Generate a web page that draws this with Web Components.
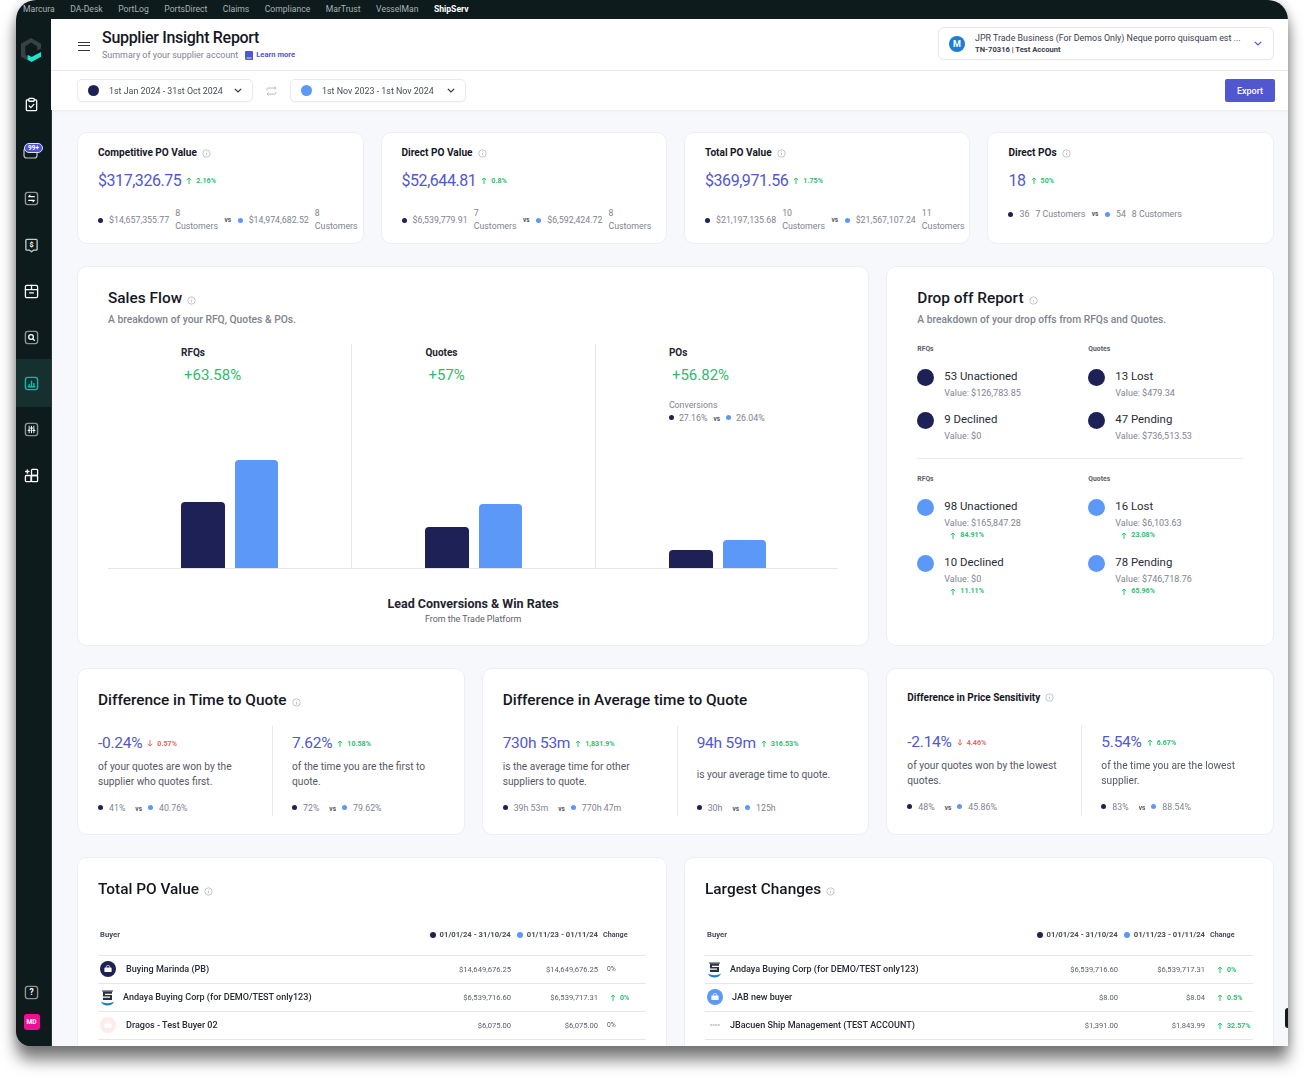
<!DOCTYPE html>
<html lang="en">
<head>
<meta charset="utf-8">
<title>Supplier Insight Report</title>
<style>
html, body { margin: 0; background: #fff; height: 1080px; overflow: hidden; }
body { font-family: Roboto, "Liberation Sans", sans-serif; padding: 0 16px; }
</style>
</head>
<body>
<app-window>
  <top-bar slot="top"></top-bar>
  <side-bar slot="side"></side-bar>
  <page-header slot="head"></page-header>
  <page-toolbar slot="head"></page-toolbar>

  <stat-card style="grid-column: span 3" label="Competitive PO Value" value="$317,326.75" delta="2.16%" a="$14,657,355.77" an="8" b="$14,974,682.52" bn="8"></stat-card>
  <stat-card style="grid-column: span 3" label="Direct PO Value" value="$52,644.81" delta="0.8%" a="$6,539,779.91" an="7" b="$6,592,424.72" bn="8"></stat-card>
  <stat-card style="grid-column: span 3" label="Total PO Value" value="$369,971.56" delta="1.75%" a="$21,197,135.68" an="10" b="$21,567,107.24" bn="11"></stat-card>
  <stat-card style="grid-column: span 3" label="Direct POs" value="18" delta="50%" a="36" an="7" b="54" bn="8" inline></stat-card>

  <sales-flow style="grid-column: span 8"></sales-flow>
  <drop-off style="grid-column: span 4"></drop-off>

  <diff-card style="grid-column: span 4" label="Difference in Time to Quote" info>
    <diff-col value="-0.24%" delta="0.57%" down a="41%" b="40.76%">of your quotes are won by the supplier who quotes first.</diff-col>
    <diff-col value="7.62%" delta="10.58%" a="72%" b="79.62%">of the time you are the first to quote.</diff-col>
  </diff-card>
  <diff-card style="grid-column: span 4" label="Difference in Average time to Quote">
    <diff-col value="730h 53m" delta="1,831.9%" a="39h 53m" b="770h 47m">is the average time for other suppliers to quote.</diff-col>
    <diff-col value="94h 59m" delta="316.53%" a="30h" b="125h">is your average time to quote.</diff-col>
  </diff-card>
  <diff-card style="grid-column: span 4" label="Difference in Price Sensitivity" info small>
    <diff-col value="-2.14%" delta="4.46%" down a="48%" b="45.86%">of your quotes won by the lowest quotes.</diff-col>
    <diff-col value="5.54%" delta="6.67%" a="83%" b="88.54%">of the time you are the lowest supplier.</diff-col>
  </diff-card>

  <table-card style="grid-column: span 6" label="Total PO Value">
    <table-row logo="navy" name="Buying Marinda (PB)" v1="$14,649,676.25" v2="$14,649,676.25" change="0%" flat></table-row>
    <table-row logo="andaya" name="Andaya Buying Corp (for DEMO/TEST only123)" v1="$6,539,716.60" v2="$6,539,717.31" change="0%"></table-row>
    <table-row logo="pink" name="Dragos - Test Buyer 02" v1="$6,075.00" v2="$6,075.00" change="0%" flat></table-row>
  </table-card>
  <table-card style="grid-column: span 6" label="Largest Changes">
    <table-row logo="andaya" name="Andaya Buying Corp (for DEMO/TEST only123)" v1="$6,539,716.60" v2="$6,539,717.31" change="0%"></table-row>
    <table-row logo="blue" name="JAB new buyer" v1="$8.00" v2="$8.04" change="0.5%"></table-row>
    <table-row logo="dash" name="JBacuen Ship Management (TEST ACCOUNT)" v1="$1,391.00" v2="$1,843.99" change="32.57%"></table-row>
  </table-card>
</app-window>

<script>
const NAVY = '#1e2156', BLUE = '#5c98f7', INK = '#15171f', GREY = '#80848f', PURPLE = '#5157cf';

const INFO = `<svg width="9" height="9" viewBox="0 0 9 9" fill="none" stroke="#b4b7bf" stroke-width=".8"><circle cx="4.5" cy="4.5" r="3.7"/><path d="M4.5 4v2.4M4.5 2.5v.7"/></svg>`;
const CHEVRON = c => `<svg width="8" height="5" viewBox="0 0 8 5" fill="none" stroke="${c}" stroke-width="1.2"><path d="M.8.8L4 4 7.2.8"/></svg>`;

class AppWindow extends HTMLElement {
    connectedCallback() {
        this.attachShadow({ mode: 'open' }).innerHTML = `
<style>
:host { display: block; position: relative; height: 1046px; border-radius: 20px 20px 0 14px; box-shadow: 0 14px 15px 0 rgba(0,0,0,.5), 0 0 12px rgba(0,0,0,.2); filter: blur(.5px); }
.clip { height: 100%; display: flex; flex-direction: column; overflow: hidden; border-radius: inherit; background: #f7f8fb; }
.body { flex: 1; min-height: 0; display: flex; }
.main { flex: 1; min-width: 0; display: flex; flex-direction: column; }
.grid { flex: 1; min-height: 0; overflow: hidden; display: grid; grid-template-columns: repeat(12, 1fr); grid-auto-rows: min-content; gap: 22px 17px; padding: 22px 14px 0 26px; }
.chat { position: absolute; right: 0; top: 1008px; width: 3px; height: 20px; background: #16191c; border-radius: 10px 0 0 10px; }
</style>
<div class="clip">
  <slot name="top"></slot>
  <div class="body">
    <slot name="side"></slot>
    <div class="main">
      <slot name="head"></slot>
      <div class="grid"><slot></slot></div>
    </div>
  </div>
</div>
<div class="chat"></div>`;
    }
}

class TopBar extends HTMLElement {
    connectedCallback() {
        const names = ['Marcura', 'DA-Desk', 'PortLog', 'PortsDirect', 'Claims', 'Compliance', 'MarTrust', 'VesselMan', 'ShipServ'];
        this.attachShadow({ mode: 'open' }).innerHTML = `
<style>
:host { display: flex; flex: none; height: 19px; box-sizing: border-box; padding: 0 0 2px 7px; background: #0d1b1c; align-items: center; gap: 15.5px; font-size: 8.6px; color: #aab2b3; white-space: nowrap; }
.on { color: #fff; font-weight: 700; }
</style>
${names.map(n => `<span class="${n === 'ShipServ' ? 'on' : ''}">${n}</span>`).join('')}`;
    }
}

class SideBar extends HTMLElement {
    connectedCallback() {
        const box = inner => `<svg width="15" height="15" viewBox="0 0 16 16" fill="none" stroke="#fff" stroke-width="1.4" stroke-linecap="round" stroke-linejoin="round">${inner}</svg>`;
        const framed = (inner, c = '#8d9394') => box(`<rect x="1.5" y="1.5" width="13" height="13" rx="2.5" stroke="${c}" stroke-width="1.5"/>${inner}`);
        const icons = [
            box(`<path d="M5 3H3.5A1 1 0 0 0 2.5 4v9.5a1 1 0 0 0 1 1h9a1 1 0 0 0 1-1V4a1 1 0 0 0-1-1H11"/><rect x="5" y="1.5" width="6" height="3" rx="1"/><path d="M5.5 9.5l1.8 1.8 3.2-3.4"/>`),
            `<svg width="20" height="16" viewBox="0 0 20 16" fill="none" style="margin-left:2px"><rect x="1" y="5" width="13" height="10" rx="2.5" stroke="#c6caca" stroke-width="1.2"/><rect x="1.5" y=".5" width="18" height="9" rx="4.5" fill="#4f55d0" stroke="#dfe1f7" stroke-width="1"/><text x="10.5" y="7.4" text-anchor="middle" font-family="Roboto" font-size="6.4" font-weight="700" fill="#fff">99+</text></svg>`,
            framed(`<path d="M5 6h6M5 6l1.5-1.5M11 10H5M11 10l-1.5 1.5" stroke-width="1.1"/>`),
            box(`<path d="M3 1.5h10a1 1 0 0 1 1 1V12a1 1 0 0 1-1 1h-3l-2 1.7L6 13H3a1 1 0 0 1-1-1V2.5a1 1 0 0 1 1-1z" stroke="#c6caca"/><text x="8" y="10" text-anchor="middle" font-family="Roboto" font-size="7.5" font-weight="700" fill="#fff" stroke="none">$</text>`),
            box(`<rect x="1.5" y="1.5" width="13" height="13" rx="1.5"/><path d="M1.5 6h13M8 1.5V6M6 9.5h4"/>`),
            framed(`<circle cx="7.5" cy="7.5" r="2.5"/><path d="M9.5 9.5l1.5 1.5"/>`),
            framed(`<path d="M4.5 11.5h7M5.5 11V9M8 11V5.5M10.5 11V8" stroke="#1cb8ae" stroke-width="1.5"/>`, '#17b3aa'),
            framed(`<path d="M5.5 4.5v7M8 4.5v7M10.5 4.5v7" stroke-width="1"/><path d="M4.5 9h2M7 6.5h2M9.5 9h2" stroke-width="1.3"/>`),
            box(`<path d="M3.5 2v3.5M1.75 3.75h3.5"/><rect x="1.5" y="8" width="6" height="6.5" rx="1"/><rect x="8" y="8" width="6.5" height="6.5" rx="1"/><rect x="8" y="1.5" width="6.5" height="6.5" rx="1"/>`)
        ];
        const heights = { 1: 48, 2: 47 };
        this.attachShadow({ mode: 'open' }).innerHTML = `
<style>
:host { display: flex; flex: none; width: 35px; flex-direction: column; background: #0d1b1c; box-shadow: 1px 0 0 #2a3436; }
.logo { height: 62px; display: flex; align-items: center; justify-content: center; flex: none; padding-right: 4px; box-sizing: border-box; }
.item { height: 46px; flex: none; display: flex; align-items: center; justify-content: center; padding-right: 4px; }
.item.on { background: #16302f; height: 48px; margin: -1px 0; }
.foot { margin-top: auto; display: flex; flex-direction: column; align-items: center; gap: 14px; padding: 0 4px 16px 0; }
.md { width: 16px; height: 16px; border-radius: 3px; background: #ee0f96; color: #fff; font-size: 6.5px; font-weight: 700; display: flex; align-items: center; justify-content: center; }
</style>
<div class="logo">
  <svg width="23" height="26" viewBox="0 0 24 27"><path d="M11.5 1L22 7v5l-4 2V9.5l-6.5-3.8-6 3.8v9l3 1.7v4.500L1 20.5V7z" fill="#3a4144"/><path d="M8 18.5l4 2.3 10-5.300v5L12 26l-4-2.300z" fill="#1fe3cb"/></svg>
</div>
${icons.map((s, i) => `<div class="item ${i === 6 ? 'on' : ''}" ${heights[i] ? `style="height:${heights[i]}px"` : ''}>${s}</div>`).join('')}
<div class="foot">
  ${framed('<text x="8" y="11" text-anchor="middle" font-family="Roboto" font-size="9" font-weight="700" fill="#fff" stroke="none">?</text>')}
  <div class="md">MD</div>
</div>`;
    }
}

class PageHeader extends HTMLElement {
    connectedCallback() {
        this.attachShadow({ mode: 'open' }).innerHTML = `
<style>
:host { display: flex; flex: none; height: 52px; box-sizing: border-box; background: #fff; border-bottom: 1px solid #e9ebef; align-items: center; padding: 0 14px 0 27px; }
.burger { width: 12px; height: 9px; border-top: 1.5px solid #33363c; border-bottom: 1.5px solid #33363c; position: relative; margin-right: 12px; margin-top: 3px; box-sizing: border-box; }
.burger::after { content: ""; position: absolute; left: 0; right: 0; top: 2.3px; height: 1.5px; background: #33363c; }
h1 { margin: 0; font-size: 16px; letter-spacing: -.3px; line-height: 20px; font-weight: 500; color: ${INK}; }
.sub { display: flex; align-items: center; font-size: 8.95px; line-height: 12px; color: ${GREY}; margin-top: 1px; }
.sub svg { margin: 0 3px 0 7px; }
.sub b { font-size: 7.6px; color: ${PURPLE}; font-weight: 700; }
.acct { margin-left: auto; width: 336px; height: 33px; box-sizing: border-box; border: 1px solid #e6e8ee; border-radius: 6px; display: flex; align-items: center; padding: 0 11px 0 10px; margin-top: -2px; box-shadow: 0 1px 2px rgba(0,0,0,.03); }
.av { width: 16px; height: 16px; border-radius: 50%; background: #1d7fd0; color: #fff; font-size: 9px; font-weight: 700; display: flex; align-items: center; justify-content: center; margin-right: 10px; flex: none; }
.t { flex: 1; font-size: 8.9px; line-height: 12px; color: #3a3d49; white-space: nowrap; overflow: hidden; }
.t b { display: block; font-size: 7.6px; line-height: 12px; color: #3a3d49; font-weight: 700; }
</style>
<div class="burger"></div>
<div>
  <h1>Supplier Insight Report</h1>
  <div class="sub">Summary of your supplier account<svg width="8" height="9" viewBox="0 0 8 9"><path d="M1 0h6a1 1 0 0 1 1 1v8H1.5A1.5 1.5 0 0 1 0 7.5V1a1 1 0 0 1 1-1z" fill="#5157cf"/><path d="M1.5 7h5" stroke="#fff" stroke-width=".8"/></svg><b>Learn more</b></div>
</div>
<div class="acct">
  <div class="av">M</div>
  <div class="t">JPR Trade Business (For Demos Only) Neque porro quisquam est ...<b>TN-70316 | Test Account</b></div>
  ${CHEVRON(PURPLE)}
</div>`;
    }
}

class DatePick extends HTMLElement {
    connectedCallback() {
        const c = this.getAttribute('dot');
        this.attachShadow({ mode: 'open' }).innerHTML = `
<style>
:host { display: flex; flex: none; width: 176px; height: 23px; box-sizing: border-box; border: 1px solid #e8eaef; border-radius: 5px; align-items: center; padding: 0 10px; background: #fff; font-size: 8.9px; color: #4a4d58; white-space: nowrap; box-shadow: 0 1px 2px rgba(0,0,0,.03); }
i { width: 11px; height: 11px; border-radius: 50%; background: ${c}; margin-right: 10px; flex: none; }
span { flex: 1; }
</style>
<i></i><span><slot></slot></span>${CHEVRON('#33363c')}`;
    }
}

class PageToolbar extends HTMLElement {
    connectedCallback() {
        this.attachShadow({ mode: 'open' }).innerHTML = `
<style>
:host { display: flex; flex: none; height: 39px; box-sizing: border-box; background: #fff; align-items: center; padding: 0 13px 0 26px; box-shadow: 0 1px 3px rgba(0,0,0,.06); position: relative; }
.swap { margin: 0 13px; display: flex; }
button { margin-left: auto; width: 50px; height: 23px; border: 0; border-radius: 2px; background: ${PURPLE}; color: #fff; font: 500 9px Roboto, sans-serif; padding: 0; }
</style>
<date-pick dot="${NAVY}">1st Jan 2024 - 31st Oct 2024</date-pick>
<div class="swap"><svg width="11" height="10" viewBox="0 0 11 10" fill="none" stroke="#b9bdc5" stroke-width="1"><path d="M1 4V3a1 1 0 0 1 1-1h8M8.5.5L10 2 8.5 3.5M10 6v1a1 1 0 0 1-1 1H1M2.5 6.5L1 8l1.5 1.5"/></svg></div>
<date-pick dot="${BLUE}">1st Nov 2023 - 1st Nov 2024</date-pick>
<button>Export</button>`;
    }
}

class UpDelta extends HTMLElement {
    connectedCallback() {
        const down = this.hasAttribute('down');
        const c = down ? '#e2685f' : '#2cc070';
        this.attachShadow({ mode: 'open' }).innerHTML = `
<style>
:host { display: inline-flex; align-items: center; gap: 4px; font-size: 7.1px; font-weight: 700; color: ${c}; white-space: nowrap; letter-spacing: 0; }
svg { flex: none; ${down ? 'transform: rotate(180deg);' : ''} }
</style>
<svg width="6" height="7" viewBox="0 0 6 7" fill="none" stroke="${c}" stroke-width="1"><path d="M3 7V1M.8 3L3 1l2.2 2"/></svg><slot></slot>`;
    }
}

class StatCard extends HTMLElement {
    connectedCallback() {
        const g = n => this.getAttribute(n);
        const inline = this.hasAttribute('inline');
        const side = (c, v, n) => inline
            ? `<i style="background:${c}"></i><span class="m">${v}</span><span class="c">${n} Customers</span>`
            : `<i style="background:${c}"></i><span class="m">${v}</span><span class="c">${n}<br>Customers</span>`;
        this.attachShadow({ mode: 'open' }).innerHTML = `
<style>
:host { display: block; height: 112px; box-sizing: border-box; background: #fff; border: 1px solid #eceef3; border-radius: 10px; padding: 13px 0 0 20px; overflow: hidden; }
.label { display: flex; align-items: center; gap: 5px; font-size: 10.1px; line-height: 14px; font-weight: 700; color: ${INK}; }
.val { display: flex; align-items: center; gap: 5px; margin-top: 9px; height: 22px; font-size: 16px; letter-spacing: -.45px; color: ${PURPLE}; }
.foot { display: flex; align-items: ${inline ? 'flex-start' : 'center'}; margin-top: ${inline ? 17 : 16}px; font-size: 8.8px; color: ${GREY}; white-space: nowrap; line-height: 13px; }
i { width: 5px; height: 5px; border-radius: 50%; flex: none; margin-right: 6px; ${inline ? 'margin-top: 4px;' : ''} }
.c { margin-left: 6px; }
.vs { font-size: 6.5px; font-weight: 700; color: #555863; margin: 0 6.5px; }
</style>
<div class="label">${g('label')}${INFO}</div>
<div class="val">${g('value')}<up-delta>${g('delta')}</up-delta></div>
<div class="foot">${side(NAVY, g('a'), g('an'))}<span class="vs">vs</span>${side(BLUE, g('b'), g('bn'))}</div>`;
    }
}

class SalesFlow extends HTMLElement {
    connectedCallback() {
        const col = (name, pct, h1, h2, extra = '') => `
<div class="col">
  <div class="n">${name}</div>
  <div class="p">${pct}</div>
  ${extra}
  <div class="bars"><b style="height:${h1}px;background:${NAVY};width:44px"></b><b style="height:${h2}px;background:${BLUE};width:43px"></b></div>
</div>`;
        this.attachShadow({ mode: 'open' }).innerHTML = `
<style>
:host { display: block; height: 380px; box-sizing: border-box; background: #fff; border: 1px solid #eceef3; border-radius: 10px; padding: 21px 30px 0; }
.t { display: flex; align-items: center; gap: 5px; font-size: 15.4px; line-height: 20px; font-weight: 500; color: ${INK}; }
.t svg { margin-top: 4px; }
.s { margin-top: 5px; font-size: 10.3px; line-height: 14px; font-weight: 500; color: ${GREY}; }
.chart { margin-top: 17px; height: 225px; box-sizing: border-box; display: grid; grid-template-columns: repeat(3, 1fr); border-bottom: 1px solid #e4e6eb; }
.col { display: flex; flex-direction: column; padding: 2px 0 0 73px; border-left: 1px solid #e4e6eb; min-width: 0; }
.col:first-child { border-left: 0; }
.n { font-size: 10px; line-height: 14px; font-weight: 700; color: #23252e; }
.p { margin: 5px 0 0 3px; font-size: 15px; line-height: 20px; color: #30bb6b; }
.bars { margin-top: auto; display: flex; align-items: flex-end; gap: 10px; }
.bars b { display: block; border-radius: 4px 4px 0 0; }
.conv { margin-top: 14px; font-size: 8.8px; line-height: 13px; color: ${GREY}; white-space: nowrap; }
.conv i { display: inline-block; width: 5px; height: 5px; border-radius: 50%; margin-right: 5px; vertical-align: 1px; }
.conv em { font-style: normal; font-size: 6.5px; font-weight: 700; margin: 0 6px; color: #555863; }
.foot { text-align: center; margin-top: 27px; font-size: 12.5px; line-height: 16px; font-weight: 700; color: #23252e; }
.foot div { font-size: 8.9px; line-height: 12px; font-weight: 400; color: #5b5e69; margin-top: 1px; }
</style>
<div class="t">Sales Flow ${INFO}</div>
<div class="s">A breakdown of your RFQ, Quotes &amp; POs.</div>
<div class="chart">
  ${col('RFQs', '+63.58%', 66, 108)}
  ${col('Quotes', '+57%', 41, 64)}
  ${col('POs', '+56.82%', 18, 28, `<div class="conv">Conversions<br><i style="background:${NAVY}"></i>27.16%<em>vs</em><i style="background:${BLUE}"></i>26.04%</div>`)}
</div>
<div class="foot">Lead Conversions &amp; Win Rates<div>From the Trade Platform</div></div>`;
    }
}

class DropOff extends HTMLElement {
    connectedCallback() {
        const item = (c, name, value, delta) => `
<div class="item"><i style="background:${c}"></i><div>
  <div class="n">${name}</div><div class="v">Value: ${value}</div>
  ${delta ? `<div class="d"><up-delta>${delta}</up-delta></div>` : ''}
</div></div>`;
        const group = (c, cls, rows) => `
<div class="group ${cls}">
  <div class="h">RFQs</div><div class="h">Quotes</div>
  ${rows.map(r => item(c, ...r)).join('')}
</div>`;
        this.attachShadow({ mode: 'open' }).innerHTML = `
<style>
:host { display: block; height: 380px; box-sizing: border-box; background: #fff; border: 1px solid #eceef3; border-radius: 10px; padding: 21px 30px 0; }
.t { display: flex; align-items: center; gap: 5px; font-size: 15.4px; line-height: 20px; font-weight: 500; color: ${INK}; }
.t svg { margin-top: 4px; }
.s { margin-top: 5px; font-size: 10.3px; line-height: 14px; font-weight: 500; color: ${GREY}; }
.group { display: grid; grid-template-columns: 171px 1fr; margin-top: 17px; row-gap: 14px; }
.group.a { row-gap: 13.5px; }
.group.b { margin-top: 15px; row-gap: 15px; }
.h { font-size: 6.8px; line-height: 10px; font-weight: 700; color: #5b5e69; margin-bottom: 1.5px; }
.b .h { margin-bottom: 0; }
.item { display: flex; gap: 10px; }
.item i { width: 17px; height: 17px; border-radius: 50%; flex: none; }
.n { font-size: 11.4px; line-height: 14px; color: #2a2c36; }
.v { margin-top: 3.5px; font-size: 9px; line-height: 12px; color: ${GREY}; }
.b .v { margin-top: 4px; }
.d { margin: 1px 0 0 6px; line-height: 10px; display: flex; }
.rule { height: 1px; background: #e8eaef; margin-top: 16.5px; }
</style>
<div class="t">Drop off Report ${INFO}</div>
<div class="s">A breakdown of your drop offs from RFQs and Quotes.</div>
${group(NAVY, 'a', [['53 Unactioned', '$126,783.85'], ['13 Lost', '$479.34'], ['9 Declined', '$0'], ['47 Pending', '$736,513.53']])}
<div class="rule"></div>
${group(BLUE, 'b', [['98 Unactioned', '$165,847.28', '84.91%'], ['16 Lost', '$6,103.63', '23.08%'], ['10 Declined', '$0', '11.11%'], ['78 Pending', '$746,718.76', '65.96%']])}`;
    }
}

class DiffCard extends HTMLElement {
    connectedCallback() {
        const small = this.hasAttribute('small');
        this.attachShadow({ mode: 'open' }).innerHTML = `
<style>
:host { display: block; height: 167px; box-sizing: border-box; background: #fff; border: 1px solid #eceef3; border-radius: 10px; padding: 21px 20px 0; }
.t { display: flex; align-items: center; gap: 5px; height: ${small ? '14px' : '20px'}; font-size: ${small ? '10px' : '15.4px'}; font-weight: ${small ? 700 : 500}; color: ${INK}; white-space: nowrap; }
.t svg { margin-top: ${small ? 0 : 4}px; }
.cols { display: grid; grid-template-columns: 174px 1fr; margin-top: ${small ? '21px' : '16px'}; }
::slotted(diff-col:last-child) { border-left: 1px solid #e8eaef; padding-left: 19px; }
</style>
<div class="t">${this.getAttribute('label')}${this.hasAttribute('info') ? INFO : ''}</div>
<div class="cols"><slot></slot></div>`;
    }
}

class DiffCol extends HTMLElement {
    connectedCallback() {
        const g = n => this.getAttribute(n);
        this.attachShadow({ mode: 'open' }).innerHTML = `
<style>
:host { display: flex; flex-direction: column; height: 90px; padding: 7px 0 1px; box-sizing: border-box; }
.val { display: flex; align-items: center; gap: 5px; height: 20px; font-size: 15.5px; letter-spacing: -.25px; color: ${PURPLE}; white-space: nowrap; }
.desc { height: 30px; margin-top: 6px; padding-right: 8px; display: flex; align-items: center; font-size: 10.2px; line-height: 15px; color: #555863; }
.leg { margin-top: auto; font-size: 8.8px; line-height: 12px; color: ${GREY}; white-space: nowrap; }
.leg i { display: inline-block; width: 5px; height: 5px; border-radius: 50%; margin-right: 6px; vertical-align: 1px; }
.leg em { font-style: normal; font-size: 6.5px; font-weight: 700; color: #555863; margin: 0 6px 0 10px; }
</style>
<div class="val">${g('value')}<up-delta ${this.hasAttribute('down') ? 'down' : ''}>${g('delta')}</up-delta></div>
<div class="desc"><span><slot></slot></span></div>
<div class="leg"><i style="background:${NAVY}"></i>${g('a')}<em>vs</em><i style="background:${BLUE}"></i>${g('b')}</div>`;
    }
}

class TableCard extends HTMLElement {
    connectedCallback() {
        this.attachShadow({ mode: 'open' }).innerHTML = `
<style>
:host { display: block; background: #fff; border: 1px solid #eceef3; border-radius: 10px 10px 0 0; padding: 21px 20px 40px; }
.t { display: flex; align-items: center; gap: 5px; font-size: 15.4px; line-height: 20px; font-weight: 500; color: ${INK}; }
.t svg { margin-top: 4px; }
.head { display: grid; grid-template-columns: 1fr auto 46px; margin-top: 30px; height: 26px; font-size: 7.7px; line-height: 12px; font-weight: 700; color: #4a4d58; border-bottom: 1px solid #e4e6eb; white-space: nowrap; padding: 0 2px; }
.head .r { display: flex; align-items: flex-start; }
.head i { width: 6px; height: 6px; border-radius: 50%; margin: 3px 4px 0 0; }
.head .ch { padding-left: 5px; font-size: 7.2px; }
</style>
<div class="t">${this.getAttribute('label')} ${INFO}</div>
<div class="head">
  <div>Buyer</div>
  <div class="r"><i style="background:${NAVY}"></i>01/01/24 - 31/10/24<i style="background:${BLUE};margin-left:6px"></i>01/11/23 - 01/11/24</div>
  <div class="ch">Change</div>
</div>
<slot></slot>`;
    }
}

class TableRow extends HTMLElement {
    connectedCallback() {
        const g = n => this.getAttribute(n);
        const bag = (bg, fg) => `<svg width="16" height="16" viewBox="0 0 16 16"><circle cx="8" cy="8" r="8" fill="${bg}"/><path d="M5 6.5h6a.6.6 0 0 1 .6.6v3.3a.6.6 0 0 1-.6.6H5a.6.6 0 0 1-.6-.6V7.1a.6.6 0 0 1 .6-.6z" fill="${fg}"/><path d="M6.4 6.5v-.9a1 1 0 0 1 1-1h1.2a1 1 0 0 1 1 1v.9" fill="none" stroke="${fg}" stroke-width=".8"/></svg>`;
        const logos = {
            navy: [bag(NAVY, '#fff'), 10],
            pink: [bag('#fdecea', '#fff'), 10],
            blue: [bag(BLUE, '#fff'), 9],
            andaya: [`<svg width="15" height="17" viewBox="0 0 15 17"><path d="M3 2.5h9v2.2H5v1.2h7v5H3V8.7h7V7.5H3z" fill="#2b3138"/><path d="M2 1.5h11v1H2z" fill="#2b3138"/><path d="M1 12.5c2 1.3 4 1.7 6.5 1.7s4.5-.4 6.5-1.700c-.8 2.500-3.400 4-6.500 4s-5.700-1.500-6.500-4z" fill="#1d7fd0"/></svg>`, 8],
            dash: [`<svg width="16" height="16" viewBox="0 0 16 16"><path d="M3 8h10" stroke="#b9bdc5" stroke-width="1.5" stroke-dasharray="2 .6"/></svg>`, 7]
        };
        const [logo, gap] = logos[g('logo')];
        this.attachShadow({ mode: 'open' }).innerHTML = `
<style>
:host { display: grid; grid-template-columns: 1fr 87px 87px 46px; height: 28px; box-sizing: border-box; border-bottom: 1px solid #e4e6eb; align-items: center; padding: 0 2px 1px; white-space: nowrap; }
.name { display: flex; align-items: center; gap: ${gap}px; font-size: 9.05px; font-weight: 500; color: #282a34; }
.name svg { flex: none; }
.v { text-align: right; font-size: 7.6px; color: #5b5e69; }
.c { display: flex; padding-left: ${this.hasAttribute('flat') ? 9 : 12}px; }
.flat { font-size: 6.8px; color: #5b5e69; }
</style>
<div class="name">${logo}<span>${g('name')}</span></div>
<div class="v">${g('v1')}</div>
<div class="v">${g('v2')}</div>
<div class="c">${this.hasAttribute('flat') ? `<span class="flat">${g('change')}</span>` : `<up-delta>${g('change')}</up-delta>`}</div>`;
    }
}

customElements.define('up-delta', UpDelta);
customElements.define('date-pick', DatePick);
customElements.define('app-window', AppWindow);
customElements.define('top-bar', TopBar);
customElements.define('side-bar', SideBar);
customElements.define('page-header', PageHeader);
customElements.define('page-toolbar', PageToolbar);
customElements.define('stat-card', StatCard);
customElements.define('sales-flow', SalesFlow);
customElements.define('drop-off', DropOff);
customElements.define('diff-card', DiffCard);
customElements.define('diff-col', DiffCol);
customElements.define('table-card', TableCard);
customElements.define('table-row', TableRow);
</script>
</body>
</html>
